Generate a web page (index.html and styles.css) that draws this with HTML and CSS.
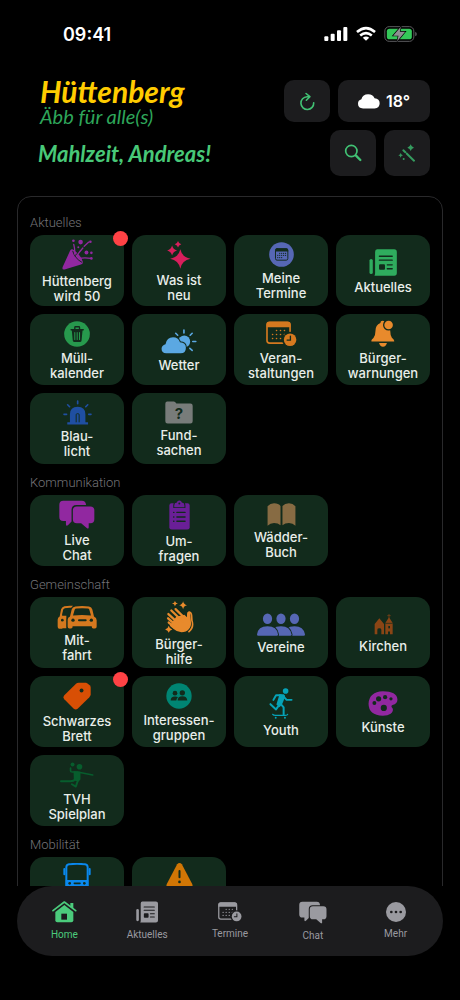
FILE: index.html
```html
<!DOCTYPE html>
<html lang="de">
<head>
  <meta charset="utf-8">
  <meta name="viewport" content="width=device-width, initial-scale=1">
  <title>Hüttenberg App</title>
  <link rel="stylesheet" href="styles.css">
</head>
<body>
  <!-- shared icons -->
  <svg class="sprite" aria-hidden="true">
    <symbol id="news" viewBox="418 131 84 82">
      <path d="M442 132h52q8 0 8 8v64q0 8-8 8h-60q2-3 2-8v-64q0-8 6-8z"/>
      <rect x="419" y="161" width="10" height="46" rx="5"/>
      <path class="cut" stroke-width="4" d="M449 153h39M449 165h39M473 179h15M473 191h15"/>
      <rect class="hole" x="448" y="177" width="18" height="17" rx="3"/>
    </symbol>
    <symbol id="calendar" viewBox="114 38 94 77">
      <rect class="line" x="117" y="41" width="70" height="63" rx="8" stroke-width="5"/>
      <path d="M116 56v-9q0-8 8-8h56q8 0 8 8v9z"/>
      <path class="line" stroke-width="5" stroke-dasharray="0 12" d="M146 66h26M134 78h38M134 90h26"/>
      <circle class="hole" cx="187" cy="94" r="24"/>
      <circle cx="187" cy="94" r="19"/>
      <path class="cut" stroke-width="4" d="M188 83v12h-10"/>
    </symbol>
    <symbol id="chat" viewBox="116 88 109 87">
      <path d="M129 90h56q12 0 13 13h-29q-15 0-15 15v35l-11 11q-6 4-6-3v-10h-8q-12 0-12-12V102q0-12 12-12z"/>
      <path d="M170 107h41q12 0 12 12v27q0 12-12 12h-5v12q0 6-6 2l-17-14h-13q-12 0-12-12v-27q0-12 12-12z"/>
    </symbol>
  </svg>

  <div class="app">
    <div class="statusbar">
      <span class="time">09:41</span>
      <div class="status-icons">
        <svg width="24" height="16" viewBox="977 79 72 46"><rect x="978" y="109" width="12" height="14" rx="3"/><rect x="997" y="101" width="12" height="22" rx="3"/><rect x="1016" y="91" width="12" height="32" rx="3"/><rect x="1035" y="81" width="12" height="42" rx="3"/></svg>
        <svg width="20" height="16" viewBox="1070 79 62 46"><path class="line butt" stroke-width="8" d="M1073 96q28-24 56 0M1083 107q18-15 36 0"/><path d="M1091 114q10-8 20 0l-10 9z"/></svg>
        <svg width="33" height="16" viewBox="1154 78 98 48"><rect x="1156" y="80" width="87" height="44" rx="13" fill="none" stroke="#5b5b5e" stroke-width="3"/><rect x="1162" y="86" width="75" height="32" rx="8" fill="#34c759"/><path d="M1247 95q5 2 5 7t-5 7z" fill="#5b5b5e"/><path d="M1204 80l-23 27h16l-4 17 24-29h-16z" fill="#8e8e93" stroke="#000" stroke-width="4" paint-order="stroke"/></svg>
      </div>
    </div>

    <header class="header">
      <div class="header-row">
        <h1 class="logo">Hüttenberg <small>Äbb für alle(s)</small></h1>
        <div class="actions">
          <button class="btn" aria-label="Aktualisieren"><svg width="16" height="19" viewBox="897 274 50 58"><path class="line" stroke-width="5" d="M928 288h-6a20 20 0 1 0 21 19M919 278l12 10-11 11"/></svg></button>
          <button class="btn btn-weather" aria-label="Wetter 18 Grad"><svg width="22" height="15" viewBox="1076 281 65 43"><path d="M1091 323q-15-1-15-14 0-10 10-13 4-15 20-15 14 0 19 12 15 1 15 15 0 15-15 15z"/></svg>18°</button>
        </div>
      </div>
      <div class="header-row">
        <p class="greeting">Mahlzeit, Andreas!</p>
        <div class="actions">
          <button class="btn btn-square" aria-label="Suche"><svg width="18" height="18" viewBox="1033 432 52 54"><circle class="line" cx="1054" cy="453" r="17" stroke-width="5"/><path class="line" stroke-width="7" d="M1068 467l13 13"/></svg></button>
          <button class="btn btn-square btn-dim" aria-label="Assistent"><svg width="18" height="18" viewBox="1196 433 52 54"><path class="line" stroke-width="6" d="M1211 452l32 31"/><path class="cut thin" d="M1220 459l-4 4"/><path d="M1233 434q2 8 10 10-8 2-10 10-2-8-10-10 8-2 10-10zM1203 460q1 6 7 7-6 1-7 7-1-6-7-7 6-1 7-7z"/><circle cx="1212" cy="478" r="3"/></svg></button>
        </div>
      </div>
    </header>

    <main class="scroll">
      <div class="panel">
        <h2>Aktuelles</h2>
        <div class="grid">
          <a class="tile purple badge" href="#"><svg width="31" height="31" viewBox="122 102 95 94"><path d="M124 187l23-50q4-7 11-2 24 18 28 37 1 6-6 8l-50 15q-9 2-6-8z"/><path class="cut" stroke-width="3" d="M155 139q6 22 28 34M162 152l10-9"/><path class="line" stroke-width="4" d="M158 118q4 15 3 29M170 149q7-10 16-20M190 124l14-13M174 161q18-3 37 0"/><circle cx="157" cy="107" r="4"/><circle cx="179" cy="111" r="7"/><circle cx="172" cy="127" r="3"/><circle cx="209" cy="110" r="4"/><circle cx="197" cy="143" r="6"/><circle cx="212" cy="144" r="4"/><circle cx="212" cy="161" r="4"/></svg><span>Hüttenberg<br>wird 50</span></a>
          <a class="tile pink" href="#"><svg width="24" height="28" viewBox="441 108 72 85"><path d="M481 133q5 24 31 29-26 5-31 30-5-25-31-30 26-5 31-29zM456 122q3 12 15 15-12 3-15 15-3-12-15-15 12-3 15-15zM474 108q2 8 10 10-8 2-10 10-2-8-10-10 8-2 10-10z"/></svg><span>Was ist<br>neu</span></a>
          <a class="tile indigo" href="#"><svg width="25" height="25" viewBox="114 111 77 77"><circle cx="152.500" cy="149.500" r="38"/><rect class="cut" x="134" y="132" width="38" height="35" rx="5" stroke-width="3"/><path class="hole" d="M133 140v-5q0-5 5-5h30q5 0 5 5v5z"/><path class="cut" stroke-width="4" stroke-dasharray="0 6" d="M147 146h20M141 152h26M141 159h18"/></svg><span>Meine<br>Termine</span></a>
          <a class="tile green" href="#"><svg width="28" height="27"><use href="#news"/></svg><span>Aktuelles</span></a>
          <a class="tile leaf" href="#"><svg width="26" height="26" viewBox="131 40 77 77"><circle cx="169.500" cy="78.500" r="38"/><path class="cut" stroke-width="4" d="M152 66h36M163 64v-5q0-2 2-2h10q2 0 2 2v5"/><path class="hole" d="M154 67h32l-3 31q0 4-4 4h-18q-4 0-4-4z"/><path class="line" stroke-width="3" d="M163 74v21M170 74v21M177 74v21"/></svg><span>Müll-<br>kalender</span></a>
          <a class="tile sky" href="#"><svg width="36" height="25" viewBox="427 61 108 76"><circle cx="497" cy="99" r="18"/><path class="line" stroke-width="5" d="M496 64v9M471 74l6 6M515 80l6-6M523 99h9M514 120l7 6"/><path class="edge" d="M442 135q-14-1-14-14 0-11 12-14 4-21 23-21 16 0 21 15 18 1 18 17 0 17-16 17z"/></svg><span>Wetter</span></a>
          <a class="tile orange" href="#"><svg width="31" height="26"><use href="#calendar"/></svg><span>Veran-<br>staltungen</span></a>
          <a class="tile amber" href="#"><svg width="24" height="27" viewBox="425 40 72 82"><path d="M426 105q-2-4 6-10 6-7 6-21 0-20 15-25 0-7 7-7t7 7q16 5 16 24 0 14 5 21 8 6 7 11zM449 110h24q-3 11-12 11t-12-11z"/><circle class="hole" cx="478" cy="55" r="17"/><circle cx="478" cy="55" r="13"/></svg><span>Bürger-<br>warnungen</span></a>
          <a class="tile blue" href="#"><svg width="29" height="25" viewBox="125 40 88 75"><path d="M146 107V83q0-23 23.500-23T193 83v24h8v7h-63v-7z"/><path class="cut" stroke-width="3" d="M165 106V84q0-3 4.500-3t4.500 3v22"/><path class="line" stroke-width="5" d="M169.500 43v8M139 54l6 6M200 54l-6 6M128 83h8M203 83h7"/></svg><span>Blau-<br>licht</span></a>
          <a class="tile gray" href="#"><svg width="28" height="23" viewBox="434 42 86 69"><path d="M441 43h20q4 0 8 6h43q7 0 7 7v47q0 7-7 7h-70q-7 0-7-7V50q0-7 6-7z"/><text class="hole mark" x="477" y="97" text-anchor="middle">?</text></svg><span>Fund-<br>sachen</span></a>
        </div>

        <h2>Kommunikation</h2>
        <div class="grid">
          <a class="tile purple" href="#"><svg width="36" height="29"><use href="#chat"/></svg><span>Live<br>Chat</span></a>
          <a class="tile violet" href="#"><svg width="21" height="30" viewBox="445 92 64 90"><rect x="446" y="101" width="62" height="80" rx="7"/><path class="edge" d="M461 113v-6q0-7 8-8 1-6 7.500-6t7.500 6q8 1 8 8v6z"/><circle class="hole" cx="476.500" cy="102" r="3"/><path class="cut" stroke-width="4" d="M469 129h25M469 143h25M469 156h25M459 129h1M459 143h1M459 156h1"/></svg><span>Um-<br>fragen</span></a>
          <a class="tile brown" href="#"><svg width="29" height="23" viewBox="740 98 88 71"><path d="M741 108q8-9 20-9 14 0 20 8v60q-8-7-20-7t-20 8zM787 107q7-8 20-8 12 0 20 9v60q-8-8-20-8t-20 7z"/></svg><span>Wädder-<br>Buch</span></a>
        </div>

        <h2>Gemeinschaft</h2>
        <div class="grid">
          <a class="tile orange" href="#"><svg width="40" height="24" viewBox="110 102 120 71"><path d="M112 166v-20q0-7 6-10l4-21q2-8 10-10 12-2 26-1l-4 6q-10-1-20 1-5 1-6 6l-3 16h13v38h-11q-1 2-5 2h-5q-5 0-5-7z"/><path class="hole" d="M126 133l3-15q1-4 5-5 10-2 14-1l-6 21z"/><circle class="hole" cx="126" cy="147" r="4"/><path class="edge" d="M142 166v-20q0-7 7-10l5-21q2-8 11-9 20-3 41 0 8 1 10 9l5 21q8 3 8 11v19q0 6-5 6h-5q-5 0-5-7h-57q0 7-5 7h-5q-5 0-5-6z"/><circle class="hole" cx="158" cy="147" r="5"/><circle class="hole" cx="213" cy="147" r="5"/><path class="cut" stroke-width="6" d="M176 147h20"/><path class="hole" d="M158 133l5-17q1-4 5-4 18-2 34 0 4 0 5 4l5 17q-27-3-54 0z"/></svg><span>Mit-<br>fahrt</span></a>
          <a class="tile amber" href="#"><svg width="29" height="32" viewBox="434 86 88 98"><path d="M464 86q2 7 9 8-7 1-9 8-1-7-9-8 8-1 9-8zM489 87q2 10 12 12-10 2-12 12-2-10-12-12 10-2 12-12zM445 162q2 9 11 11-9 2-11 10-2-8-11-10 9-2 11-11z"/><path class="line" stroke-width="5" d="M508 120q6 1 7 10l1 16q7 20-9 34"/><path d="M468 134l25-6 8 8v-10q0-8 5-8 4 0 5 7l2 24q2 14-6 23-8 10-23 10-13 0-24-10l-12-10z"/><path class="line" stroke-width="7" d="M466 111l28 27M453 115l34 33M444 126l30 28M443 139l28 25M445 152l24 19"/></svg><span>Bürger-<br>hilfe</span></a>
          <a class="tile indigo" href="#"><svg width="48" height="23" viewBox="80 63 146 69"><ellipse cx="112" cy="80" rx="14" ry="16"/><ellipse cx="153" cy="80" rx="14" ry="16"/><ellipse cx="194" cy="80" rx="14" ry="16"/><path class="edge" d="M163 132q0-29 31-29 28 0 32 25 0 4-4 4z"/><path class="edge" d="M122 132q0-29 31-29 28 0 32 25 0 4-4 4z"/><path class="edge" d="M84 132q-4 0-4-4 3-25 32-25t32 25q0 4-4 4z"/></svg><span>Vereine</span></a>
          <a class="tile rust" href="#"><svg width="19" height="21" viewBox="430 70 57 63"><path d="M432 131v-31l14-17 14 17v31h-8v-14q0-4-6-4t-6 4v14zM464 131V97l11-17 11 17v34h-8v-6q0-3-3-3t-3 3v6z"/><path class="line" stroke-width="2" d="M475 71v12M471 75h8"/><path class="cut" stroke-width="2" d="M465 98h20"/><rect class="hole" x="473" y="106" width="5" height="7"/></svg><span>Kirchen</span></a>
          <a class="tile flame badge" href="#"><svg width="28" height="28" viewBox="128 332 86 86"><path d="M176 334h23q3 0 11 8 3 3 3 7v21q0 5-4 9l-36 35q-6 5-12 0l-29-29q-5-6 0-12l36-36q3-3 8-3z"/><circle class="hole" cx="185" cy="358" r="6"/></svg><span>Schwarzes<br>Brett</span></a>
          <a class="tile teal" href="#"><svg width="26" height="26" viewBox="438 337 78 77"><circle cx="477" cy="375.500" r="38"/><circle class="hole" cx="465" cy="367" r="7"/><circle class="hole" cx="487" cy="366" r="8"/><path class="hole" d="M452 389q0-12 13-12 6 0 9 2-5 4-5 10zM473 389q0-13 14-13t15 13z"/></svg><span>Interessen-<br>gruppen</span></a>
          <a class="tile cyan" href="#"><svg width="24" height="31" viewBox="117 291 72 94"><circle cx="167" cy="300" r="8.500"/><path class="line" stroke-width="6" d="M153 313h-15l-8 14M161 317l9 10h15M150 337l11 13v21M147 343l-9 13-17-16"/><path d="M147 310h14q6 3 4 9l-8 20-8 10-10-8 8-26z"/><path class="line" stroke-width="4" d="M128 371q2 3 8 3h30q6 0 7-3"/><circle cx="137" cy="381" r="3"/><circle cx="165" cy="381" r="3"/></svg><span>Youth</span></a>
          <a class="tile purple" href="#"><svg width="30" height="25" viewBox="415 299 91 77"><path d="M460 300q43 0 45 25 0 13-15 17-7 3 0 10 4 9-6 17-8 6-24 6-44-2-44-37 2-36 44-38z"/><circle class="hole" cx="434" cy="336" r="6"/><circle class="hole" cx="447" cy="323" r="8"/><circle class="hole" cx="467" cy="318" r="6.500"/><circle class="hole" cx="485" cy="323" r="5"/><circle class="hole" cx="463" cy="351" r="9.500"/></svg><span>Künste</span></a>
          <a class="tile forest" href="#"><svg width="34" height="26" viewBox="119 34 103 78"><circle cx="157" cy="41" r="6"/><circle cx="178" cy="48" r="8.500"/><path class="line" stroke-width="5" d="M151 52v9q0 3 5 3h16q20 4 46 9"/><path class="line" stroke-width="6" d="M167 86q-8 7-20 6h-25M174 87l-7 21-12-7"/><path d="M160 61l21 2v24l-6 6-14-3z"/></svg><span>TVH<br>Spielplan</span></a>
        </div>

        <h2>Mobilität</h2>
        <div class="grid">
          <a class="tile azure" href="#" aria-label="Bus"><svg width="28" height="30" viewBox="128 335 84 90"><path class="line" stroke-width="6" d="M138 410v-62q0-8 8-9 24-3 48 0 8 1 8 9v62z"/><path class="line" stroke-width="6" d="M132 353v16M208 353v16"/><path d="M136 386h68v27h-68z"/><circle class="hole" cx="148" cy="396" r="4"/><circle class="hole" cx="192" cy="396" r="4"/><path class="cut" stroke-width="5" d="M162 396h17"/><path d="M142 411h13v8q0 4-4 4h-5q-4 0-4-4zM185 411h13v8q0 4-4 4h-5q-4 0-4-4z"/></svg></a>
          <a class="tile warn" href="#" aria-label="Warnung"><svg width="27" height="25" viewBox="437 341 80 74"><path d="M470 345q7-8 14 0l31 59q3 10-6 10h-64q-9 0-6-10z"/><path class="cut" stroke-width="6" d="M477 365v18"/><circle class="hole" cx="477" cy="397" r="4"/></svg></a>
        </div>
      </div>
    </main>

    <nav class="tabbar">
      <a class="tab active" href="#"><svg width="25" height="22" viewBox="157 95 75 66"><path class="line" stroke-width="5" d="M160 124l34-26 34 26"/><path d="M212 101h9v19l-9-7z"/><path d="M167 128l27-21 27 21v25q0 6-6 6h-42q-6 0-6-6z"/><rect class="hole" x="185" y="133" width="17" height="18"/></svg>Home</a>
      <a class="tab" href="#"><svg width="22" height="22"><use href="#news"/></svg>Aktuelles</a>
      <a class="tab" href="#"><svg width="24" height="20"><use href="#calendar"/></svg>Termine</a>
      <a class="tab" href="#"><svg width="28" height="23"><use href="#chat"/></svg>Chat</a>
      <a class="tab" href="#"><svg width="20" height="20" viewBox="0 0 60 60"><circle cx="30" cy="30" r="30"/><circle class="hole" cx="16" cy="30" r="4"/><circle class="hole" cx="30" cy="30" r="4"/><circle class="hole" cx="44" cy="30" r="4"/></svg>Mehr</a>
    </nav>
  </div>
</body>
</html>
```

FILE: styles.css
```css
* {
  box-sizing: border-box;
}
body {
  --back: #000;
  margin: 0;
  background: #000;
  color: #fff;
  font-family: Inter, "Noto Sans", sans-serif;
}
a {
  color: inherit;
  text-decoration: none;
}
svg {
  display: block;
  flex: none;
  fill: currentColor;
}
.sprite {
  position: absolute;
  width: 0;
  height: 0;
}

/* icon parts */
.line {
  fill: none;
  stroke: currentColor;
  stroke-linecap: round;
  stroke-linejoin: round;
}
.butt {
  stroke-linecap: butt;
}
.cut {
  fill: none;
  stroke: var(--back);
  stroke-linecap: round;
}
.thin {
  stroke-width: 2px;
}
.hole {
  fill: var(--back);
}
.edge {
  stroke: var(--back);
  stroke-width: 6px;
  paint-order: stroke;
}
.mark {
  font-size: 46px;
  font-weight: 700;
}

.app {
  display: flex;
  flex-direction: column;
  height: 100vh;
  padding-bottom: 44px;
}

.statusbar {
  display: flex;
  flex: none;
  justify-content: space-between;
  align-items: center;
  height: 68px;
  padding: 0 43px 0 63px;
}
.time {
  font-size: 18px;
  font-weight: 600;
}
.status-icons {
  display: flex;
  gap: 8px;
}

.header {
  display: flex;
  flex: none;
  flex-direction: column;
  gap: 8px;
  padding: 12px 30px 20px;
}
.header-row {
  display: flex;
  justify-content: space-between;
  align-items: center;
}
.logo {
  margin: -4px 0;
  padding-left: 10px;
  color: #ffcc00;
  font-family: Lato, sans-serif;
  font-size: 30px;
  font-style: italic;
  font-weight: 700;
  line-height: 30px;
}
.logo small {
  display: block;
  color: #2ea65a;
  font-size: 20px;
  font-weight: 400;
  line-height: 20px;
}
.greeting {
  margin: 0;
  padding-left: 8px;
  color: #48c878;
  font-family: Lato, sans-serif;
  font-size: 22px;
  font-style: italic;
  font-weight: 700;
}
.actions {
  display: flex;
  gap: 8px;
}
.btn {
  --back: #1c1c1e;
  display: flex;
  justify-content: center;
  align-items: center;
  gap: 6px;
  width: 46px;
  height: 42px;
  padding: 0;
  border: 0;
  border-radius: 10px;
  background: var(--back);
  color: #41c274;
  font: inherit;
}
.btn-weather {
  width: 92px;
  color: #fff;
  font-size: 16px;
  font-weight: 600;
}
.btn-square {
  height: 46px;
}
.btn-dim {
  color: #359c5f;
}

.scroll {
  flex: 1;
  min-height: 0;
  padding: 0 17px;
  overflow-y: auto;
  scrollbar-width: none;
}
.panel {
  display: flex;
  flex-direction: column;
  padding: 7px 12px 12px;
  border: 1px solid #29292b;
  border-radius: 14px;
}
.panel h2 {
  margin: 10px 0 4px;
  color: #747478;
  font-family: Roboto, sans-serif;
  font-size: 13px;
  font-weight: 300;
  line-height: 17px;
}
.grid {
  display: grid;
  grid-template-columns: repeat(4, 1fr);
  gap: 8px;
}
.tile {
  --back: #122b1c;
  position: relative;
  display: flex;
  flex-direction: column;
  justify-content: center;
  align-items: center;
  gap: 4px;
  height: 71px;
  padding-top: 2px;
  border-radius: 14px;
  background: var(--back);
}
.tile span {
  color: #e9eeea;
  font-size: 13px;
  font-weight: 500;
  line-height: 15px;
  text-align: center;
}
.badge::after {
  content: "";
  position: absolute;
  top: -4px;
  right: -4px;
  width: 15px;
  height: 15px;
  border-radius: 50%;
  background: #ff4245;
}

.purple { color: #9128a0; }
.violet { color: #6a1f97; }
.pink { color: #d81f5c; }
.indigo { color: #5667b4; }
.green { color: #2fac5e; }
.leaf { color: #27994d; }
.sky { color: #5ba8e2; }
.orange { color: #d5791f; }
.amber { color: #e88a2c; }
.blue { color: #1f4fa2; }
.gray { color: #787c7a; }
.brown { color: #876b43; }
.rust { color: #8a4515; }
.flame { color: #d84f05; }
.teal { color: #008573; }
.cyan { color: #06a3b8; }
.forest { color: #075d2d; }

/* icon-only tiles keep the icon at the top */
.azure,
.warn {
  justify-content: flex-start;
  padding-top: 6px;
}
.azure { color: #0a88ee; }
.warn { color: #d17605; }

.tabbar {
  --back: #1c1c1e;
  display: flex;
  flex: none;
  height: 70px;
  margin: 0 17px;
  padding: 0 6px;
  border-radius: 35px;
  background: var(--back);
}
.tab {
  display: flex;
  flex: 1;
  flex-direction: column;
  justify-content: center;
  align-items: center;
  gap: 5px;
  color: #9a9aa0;
  font-family: Roboto, sans-serif;
  font-size: 10px;
  line-height: 13px;
}
.tab.active {
  color: #4bcb7c;
}
```
